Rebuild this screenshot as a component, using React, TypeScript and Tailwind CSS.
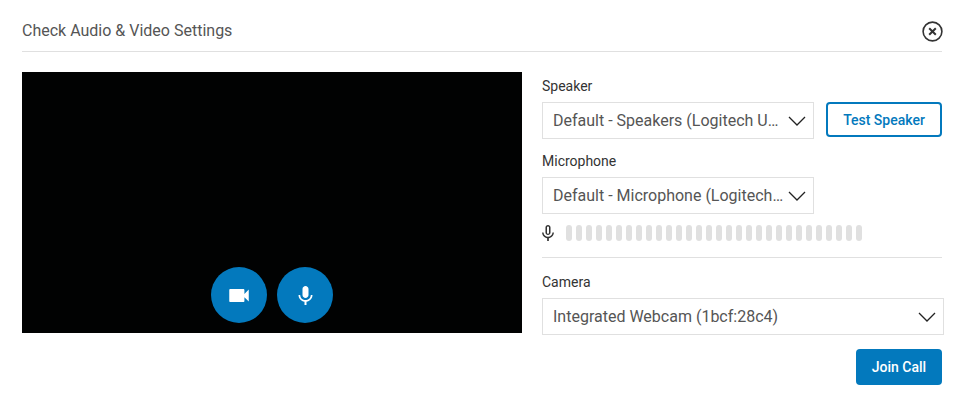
function Chevron() {
  return (
    <svg width="18" height="10" viewBox="0 0 18 10" fill="none" className="shrink-0">
      <path d="M1 1l8 8 8-8" stroke="#222" strokeWidth="1.3" />
    </svg>
  );
}

function Select({ value, className }: { value: string; className: string }) {
  return (
    <div className={`flex h-[37px] items-center border border-[#e0e0e0] pl-[10px] pr-[7px] ${className}`}>
      <span className="flex-1 truncate text-base text-[#555]">{value}</span>
      <span className="ml-[3px] flex"><Chevron /></span>
    </div>
  );
}

function MicIcon({ width, height }: { width: number; height: number }) {
  return (
    <svg width={width} height={height} viewBox="5 2 14 19" fill="currentColor" className="shrink-0">
      <path d="M12 14c1.66 0 3-1.34 3-3V5c0-1.66-1.34-3-3-3S9 3.34 9 5v6c0 1.66 1.34 3 3 3zm5.3-3c0 3-2.54 5.1-5.3 5.1S6.7 14 6.7 11H5c0 3.41 2.72 6.23 6 6.72V21h2v-3.28c3.28-.48 6-3.3 6-6.72h-1.7z" />
    </svg>
  );
}

export default function App() {
  const bars = Array.from({ length: 30 });

  return (
    <div className="h-[400px] w-[963px] bg-white pl-[22px] pr-[21px] font-['Roboto',sans-serif]">
      {/* Header */}
      <div className="flex h-[52px] items-center justify-between border-b border-[#e0e0e0] pt-[11px]">
        <h1 className="text-base font-normal text-[#555]">Check Audio &amp; Video Settings</h1>
        <svg width="21" height="21" viewBox="0 0 21 21" fill="none" className="mr-[-1px]">
          <circle cx="10.5" cy="10.5" r="9.4" stroke="#333" strokeWidth="1.6" />
          <path d="M7.2 7.2l6.6 6.6M13.8 7.2l-6.6 6.6" stroke="#333" strokeWidth="2" />
        </svg>
      </div>

      <div className="mt-5 flex gap-5">
        {/* Preview */}
        <div className="flex h-[261px] w-[500px] shrink-0 items-end justify-center gap-[10px] bg-[#010202] pb-[10px]">
          <button className="flex size-14 items-center justify-center rounded-full bg-[#0379bd] text-white">
            <svg width="20" height="13" viewBox="3 6 18 12" fill="currentColor">
              <path d="M17 10.5V7c0-.55-.45-1-1-1H4c-.55 0-1 .45-1 1v10c0 .55.45 1 1 1h12c.55 0 1-.45 1-1v-3.5l4 4v-11l-4 4z" />
            </svg>
          </button>
          <button className="flex size-14 items-center justify-center rounded-full bg-[#0379bd] text-white">
            <MicIcon width={15} height={19} />
          </button>
        </div>

        {/* Settings */}
        <div className="w-[400px]">
          <label className="mt-[5px] block h-[25px] text-sm leading-[18px] text-[#333]">Speaker</label>
          <div className="flex items-start gap-3">
            <Select value="Default - Speakers (Logitech USB)" className="w-[272px]" />
            <button className="h-[35px] w-[116px] rounded border-2 border-[#0379bd] text-sm font-medium text-[#0379bd]">
              Test Speaker
            </button>
          </div>

          <label className="mt-[13px] block h-[25px] text-sm leading-[18px] text-[#333]">Microphone</label>
          <Select value="Default - Microphone (Logitech USB)" className="w-[272px]" />

          <div className="mt-[11px] flex items-center">
            <svg width="12" height="16" viewBox="5 2 14 19" fill="#333" className="shrink-0">
              <path d="M12 14c1.66 0 2.99-1.34 2.99-3L15 5c0-1.66-1.34-3-3-3S9 3.34 9 5v6c0 1.66 1.34 3 3 3zm-1.2-9.1c0-.66.54-1.2 1.2-1.2.66 0 1.2.54 1.2 1.2l-.01 6.2c0 .66-.53 1.2-1.19 1.2-.66 0-1.2-.54-1.2-1.2V4.9zm6.5 6.1c0 3-2.54 5.1-5.3 5.1S6.7 14 6.7 11H5c0 3.41 2.72 6.23 6 6.72V21h2v-3.28c3.28-.48 6-3.3 6-6.72h-1.7z" />
            </svg>
            <div className="ml-3 flex gap-1">
              {bars.map((_, i) => (
                <span key={i} className="h-4 w-[6px] rounded-[3px] bg-[#e0e0e0]" />
              ))}
            </div>
          </div>

          <div className="mt-4 border-t border-[#e0e0e0]" />

          <label className="mt-[15px] block h-[25px] text-sm leading-[18px] text-[#333]">Camera</label>
          <Select value="Integrated Webcam (1bcf:28c4)" className="w-[402px]" />

          <div className="mt-[14px] flex justify-end">
            <button className="h-9 w-[86px] rounded bg-[#0379bd] text-sm font-medium text-white">Join Call</button>
          </div>
        </div>
      </div>
    </div>
  );
}
